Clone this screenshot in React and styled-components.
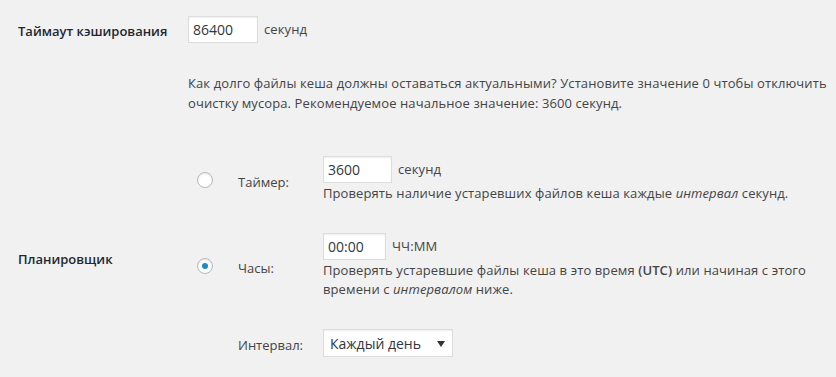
import React from "react";
import styled, { createGlobalStyle } from "styled-components";

const Global = createGlobalStyle`
  html, body { margin: 0; padding: 0; background: #f1f1f1; }
  body {
    font-family: "Open Sans", "Noto Sans", sans-serif;
    font-size: 13px;
    color: #444;
  }
`;

const Page = styled.div`
  padding-top: 16px;
  width: 836px;
`;

const Row = styled.div`
  display: grid;
  grid-template-columns: 188px 1fr;
  align-items: center;
`;

const Heading = styled.div`
  padding-left: 18px;
  font-weight: 600;
  font-size: 13px;
  color: #23282d;
  position: relative;
  top: ${(p) => p.$shift || 0}px;
`;

const Inline = styled.div`
  display: flex;
  align-items: center;
  gap: 6px;
  line-height: 19px;
  letter-spacing: 0.1px;
`;

const TextInput = styled.input`
  box-sizing: border-box;
  width: ${(p) => p.$w}px;
  height: 27px;
  padding: 3px 4px;
  border: 1px solid #ddd;
  background: #fff;
  box-shadow: inset 0 1px 2px rgba(0, 0, 0, 0.07);
  font-family: "Open Sans", "Noto Sans", sans-serif;
  font-size: 14px;
  color: #32373c;
  margin: 0;
  outline: none;
`;

const Help = styled.p`
  margin: 30px 0 0 188px;
  width: 640px;
  line-height: 20px;
  letter-spacing: 0.1px;
`;

const Scheduler = styled(Row)`
  margin-top: 43px;
`;

const Options = styled.div`
  display: grid;
  grid-template-columns: 41px 85px 1fr;
  row-gap: 30px;
  align-items: center;
  padding-left: 9px;
`;

const Radio = styled.input.attrs({ type: "radio" })`
  appearance: none;
  -webkit-appearance: none;
  box-sizing: border-box;
  width: 16px;
  height: 16px;
  margin: 0;
  border-radius: 50%;
  border: 1px solid #b4b9be;
  background: #fff;
  box-shadow: inset 0 1px 2px rgba(0, 0, 0, 0.1);
  display: grid;
  place-items: center;
  &:checked::before {
    content: "";
    width: 6px;
    height: 6px;
    border-radius: 50%;
    background: #1e8cbe;
  }
`;

const OptLabel = styled.label`
  font-size: 13px;
  color: #444;
  position: relative;
  top: 2px;
`;

const Field = styled.div`
  display: flex;
  flex-direction: column;
`;

const Desc = styled.div`
  line-height: 19px;
  margin-top: 1px;
  width: 500px;
  letter-spacing: 0.1px;
`;

const Strong = styled.span`
  font-weight: 600;
`;

const Em = styled.em`
  font-style: italic;
`;

const SelectWrap = styled.div`
  position: relative;
  width: 130px;
  height: 28px;
  &::after {
    content: "";
    position: absolute;
    right: 8px;
    top: 12px;
    border-left: 4px solid transparent;
    border-right: 4px solid transparent;
    border-top: 6px solid #333;
    pointer-events: none;
  }
`;

const Select = styled.select`
  appearance: none;
  -webkit-appearance: none;
  box-sizing: border-box;
  width: 100%;
  height: 100%;
  margin: 0;
  padding: 2px 6px;
  border: 1px solid #ddd;
  background: #fff;
  box-shadow: inset 0 1px 2px rgba(0, 0, 0, 0.07);
  font-family: "Open Sans", "Noto Sans", sans-serif;
  font-size: 14px;
  color: #32373c;
  outline: none;
`;

export default function App() {
  return (
    <>
      <Global />
      <Page>
        <Row>
          <Heading $shift={1}>Таймаут кэширования</Heading>
          <Inline>
            <TextInput $w={70} defaultValue="86400" />
            <span>секунд</span>
          </Inline>
        </Row>
        <Help>
          Как долго файлы кеша должны оставаться актуальными? Установите
          значение 0 чтобы отключить
          <br />
          очистку мусора. Рекомендуемое начальное значение: 3600 секунд.
        </Help>
        <Scheduler>
          <Heading $shift={2}>Планировщик</Heading>
          <Options>
            <Radio name="sched" />
            <OptLabel>Таймер:</OptLabel>
            <Field>
              <Inline>
                <TextInput $w={69} defaultValue="3600" />
                <span>секунд</span>
              </Inline>
              <Desc>
                Проверять наличие устаревших файлов кеша каждые{" "}
                <Em>интервал</Em> секунд.
              </Desc>
            </Field>

            <Radio name="sched" defaultChecked />
            <OptLabel>Часы:</OptLabel>
            <Field>
              <Inline>
                <TextInput $w={63} defaultValue="00:00" />
                <span>ЧЧ:ММ</span>
              </Inline>
              <Desc>
                Проверять устаревшие файлы кеша в это время <Strong>(UTC)</Strong>{" "}
                или начиная с этого
                <br />
                времени с <Em>интервалом</Em> ниже.
              </Desc>
            </Field>

            <span />
            <OptLabel>Интервал:</OptLabel>
            <SelectWrap>
              <Select defaultValue="daily">
                <option value="daily">Каждый день</option>
                <option value="hourly">Каждый час</option>
              </Select>
            </SelectWrap>
          </Options>
        </Scheduler>
      </Page>
    </>
  );
}
